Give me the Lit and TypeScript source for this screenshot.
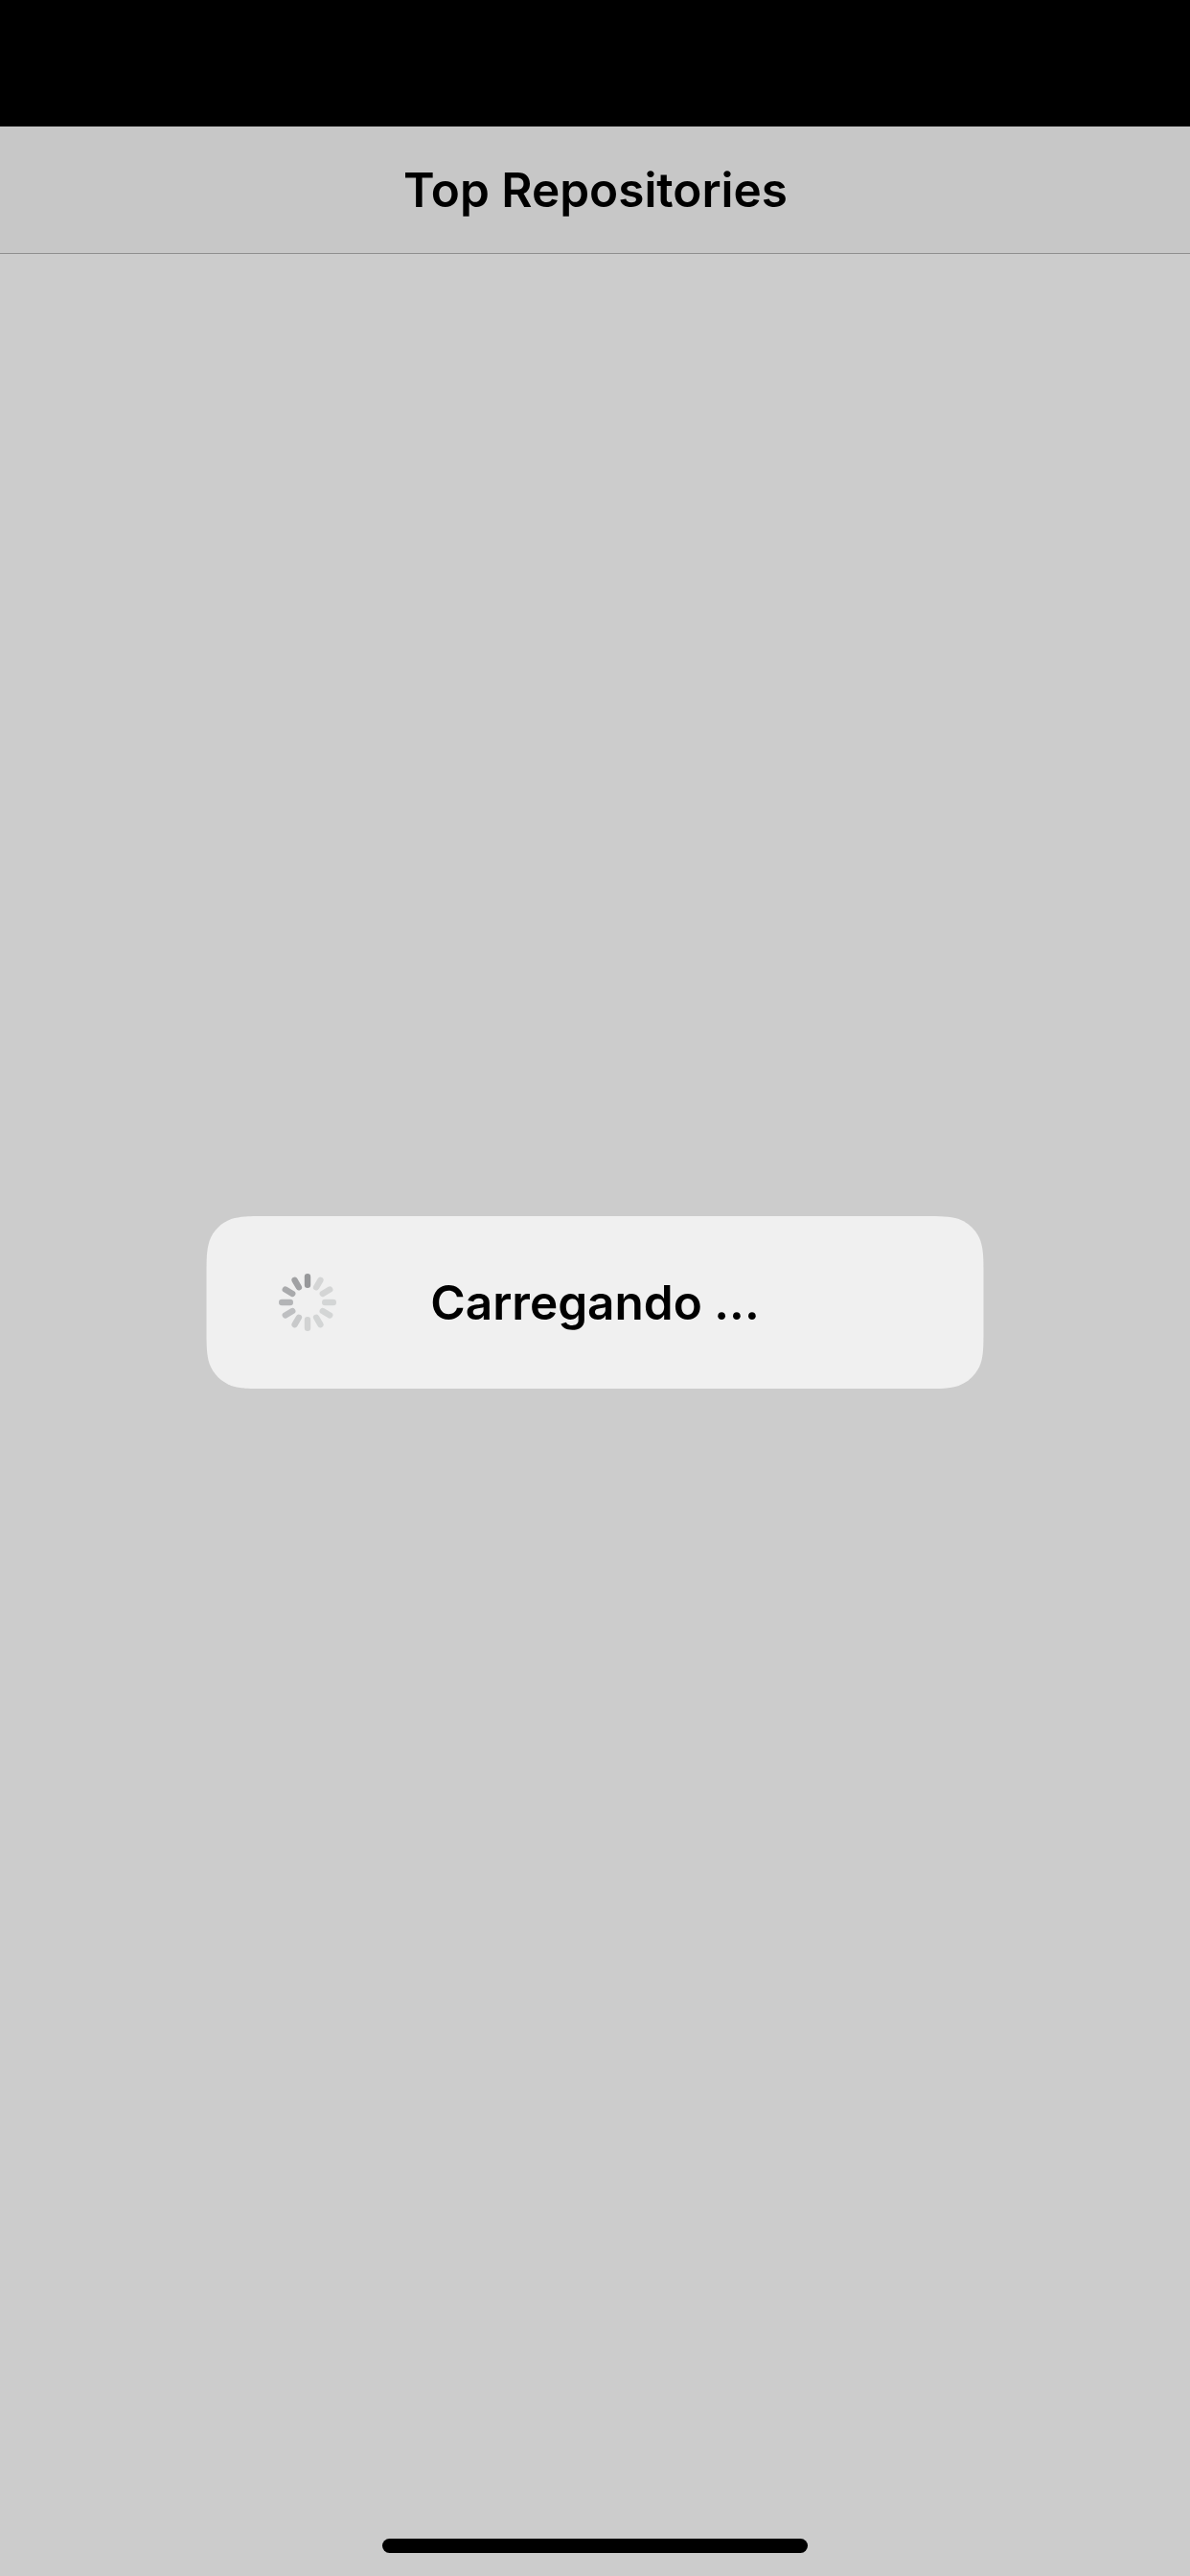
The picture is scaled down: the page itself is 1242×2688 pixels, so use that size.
import { LitElement, html, svg, css } from "lit";
import { customElement } from "lit/decorators.js";

/** Spoke shades, clockwise from twelve o'clock. */
const SPOKES = [
  "#97989a", "#d4d5d5", "#d4d5d5", "#d3d5d5", "#d3d5d5", "#d3d5d5",
  "#d2d3d3", "#c8c9ca", "#bebfc1", "#b3b4b6", "#a9aaac", "#a0a1a3",
];

/** Rounded rectangle with continuous-curvature corners. */
function squircle(w: number, h: number, r: number): string {
  const a = 1.52866 * r, b = 1.08849 * r, c = 0.86841 * r, d = 0.63149 * r;
  const e = 0.07491 * r, f = 0.37282 * r, g = 0.16906 * r;
  return `M${a} 0H${w - a}C${w - b} 0 ${w - c} 0 ${w - d} ${e}C${w - f} ${g} ${w - g} ${f} ${w - e} ${d}C${w} ${c} ${w} ${b} ${w} ${a}
    V${h - a}C${w} ${h - b} ${w} ${h - c} ${w - e} ${h - d}C${w - g} ${h - f} ${w - f} ${h - g} ${w - d} ${h - e}C${w - c} ${h} ${w - b} ${h} ${w - a} ${h}
    H${a}C${b} ${h} ${c} ${h} ${d} ${h - e}C${f} ${h - g} ${g} ${h - f} ${e} ${h - d}C0 ${h - c} 0 ${h - b} 0 ${h - a}
    V${a}C0 ${b} 0 ${c} ${e} ${d}C${g} ${f} ${f} ${g} ${d} ${e}C${c} 0 ${b} 0 ${a} 0Z`;
}

@customElement("activity-spinner")
class ActivitySpinner extends LitElement {
  static styles = css`
    :host { display: block; width: 62px; height: 62px; }
    .spokes { display: block; }
  `;
  render() {
    return html`<svg class="spokes" width="62" height="62" viewBox="-31 -31 62 62">
      ${SPOKES.map((shade, i) => svg`<rect x="-3.2" y="-30" width="6.4" height="15" rx="3.2" fill=${shade} transform="rotate(${i * 30})"/>`)}
    </svg>`;
  }
}

@customElement("loading-alert")
class LoadingAlert extends LitElement {
  static styles = css`
    :host { display: grid; width: 812px; height: 180px; }
    .plate { grid-area: 1 / 1; display: block; }
    .content {
      grid-area: 1 / 1; z-index: 1;
      display: grid; grid-template-columns: 136.5px 1fr 136.5px; align-items: center;
    }
    .spinner { justify-self: end; }
    .message {
      text-align: center; white-space: nowrap; color: #000;
      font: 600 49.5px/60px Inter, "Liberation Sans", sans-serif;
    }
  `;
  render() {
    return html`
      <svg class="plate" width="812" height="180" viewBox="-0.5 0 812 180"><path d=${squircle(811, 180, 41)} fill="#f0f0f0"/></svg>
      <div class="content">
        <activity-spinner class="spinner"></activity-spinner>
        <div class="message">Carregando ...</div>
      </div>`;
  }
}

@customElement("app-root")
class AppRoot extends LitElement {
  static styles = css`
    :host {
      display: flex; flex-direction: column; box-sizing: border-box;
      width: 1242px; height: 2688px; overflow: hidden; background: #ccc;
    }
    .status { flex: 0 0 132px; background: #000; }
    .nav {
      flex: 0 0 133px; box-sizing: border-box;
      display: flex; align-items: center; justify-content: center;
      background: #c7c7c7; border-bottom: 1px solid #8f8f8f;
    }
    .title {
      margin: 0; padding-left: 1px; color: #000; white-space: nowrap;
      font: 600 49.5px/60px Inter, "Liberation Sans", sans-serif;
    }
    .body { flex: 1; display: flex; justify-content: center; padding-top: 1004px; box-sizing: border-box; }
    .home { flex: 0 0 39px; display: flex; justify-content: center; }
    .bar { width: 444px; height: 15px; border-radius: 7.5px; background: #000; }
  `;
  render() {
    return html`
      <div class="status"></div>
      <header class="nav"><h1 class="title">Top Repositories</h1></header>
      <main class="body"><loading-alert></loading-alert></main>
      <footer class="home"><div class="bar"></div></footer>`;
  }
}
